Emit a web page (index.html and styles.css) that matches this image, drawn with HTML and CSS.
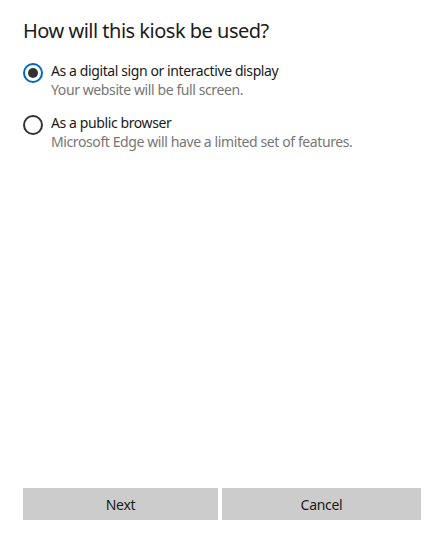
FILE: index.html
```html
<!DOCTYPE html>
<html>
<head>
<meta charset="utf-8">
<title>Kiosk</title>
<link rel="stylesheet" href="styles.css">
</head>
<body>
<div class="page">
	<h1 class="title">How will this kiosk be used?</h1>
	<ul class="options">
		<li class="option">
			<span class="radio on"></span>
			<div class="text">
				<p class="label">As a digital sign or interactive display</p>
				<p class="desc">Your website will be full screen.</p>
			</div>
		</li>
		<li class="option">
			<span class="radio"></span>
			<div class="text">
				<p class="label">As a public browser</p>
				<p class="desc">Microsoft Edge will have a limited set of features.</p>
			</div>
		</li>
	</ul>
	<div class="buttons">
		<button class="btn next">Next</button>
		<button class="btn cancel">Cancel</button>
	</div>
</div>
</body>
</html>
```
FILE: styles.css
```css
*{margin:0; padding:0; list-style:none; box-sizing:border-box;}
html,body{height:100%; background:#fff;}
body{font-family:"Noto Sans", sans-serif; color:#1a1a1a;}
.page{height:539px; display:flex; flex-direction:column; padding:17px 23px 19px;}
.title{font-size:20px; font-weight:400; line-height:28px; letter-spacing:-0.5px; color:#1b1b1b;}
.options{margin-top:16px; display:flex; flex-direction:column; gap:14px;}
.option{display:flex; align-items:flex-start; gap:8px;}
.radio{width:20px; height:20px; border:2px solid #333; border-radius:50%; margin-top:2px; flex-shrink:0; display:flex; align-items:center; justify-content:center;}
.radio.on{border-color:#0067c0;}
.radio.on::after{content:""; width:10px; height:10px; border-radius:50%; background:#333;}
.label{font-size:14px; line-height:19px; letter-spacing:-0.4px;}
.desc{font-size:14px; line-height:19px; letter-spacing:-0.4px; color:#767676;}
.buttons{margin-top:auto; display:flex; gap:4px;}
.btn{height:32px; border:none; background:#ccc; font-family:inherit; font-size:14px; letter-spacing:-0.3px; color:#1a1a1a;}
.next{width:195px;}
.cancel{width:199px;}
```
